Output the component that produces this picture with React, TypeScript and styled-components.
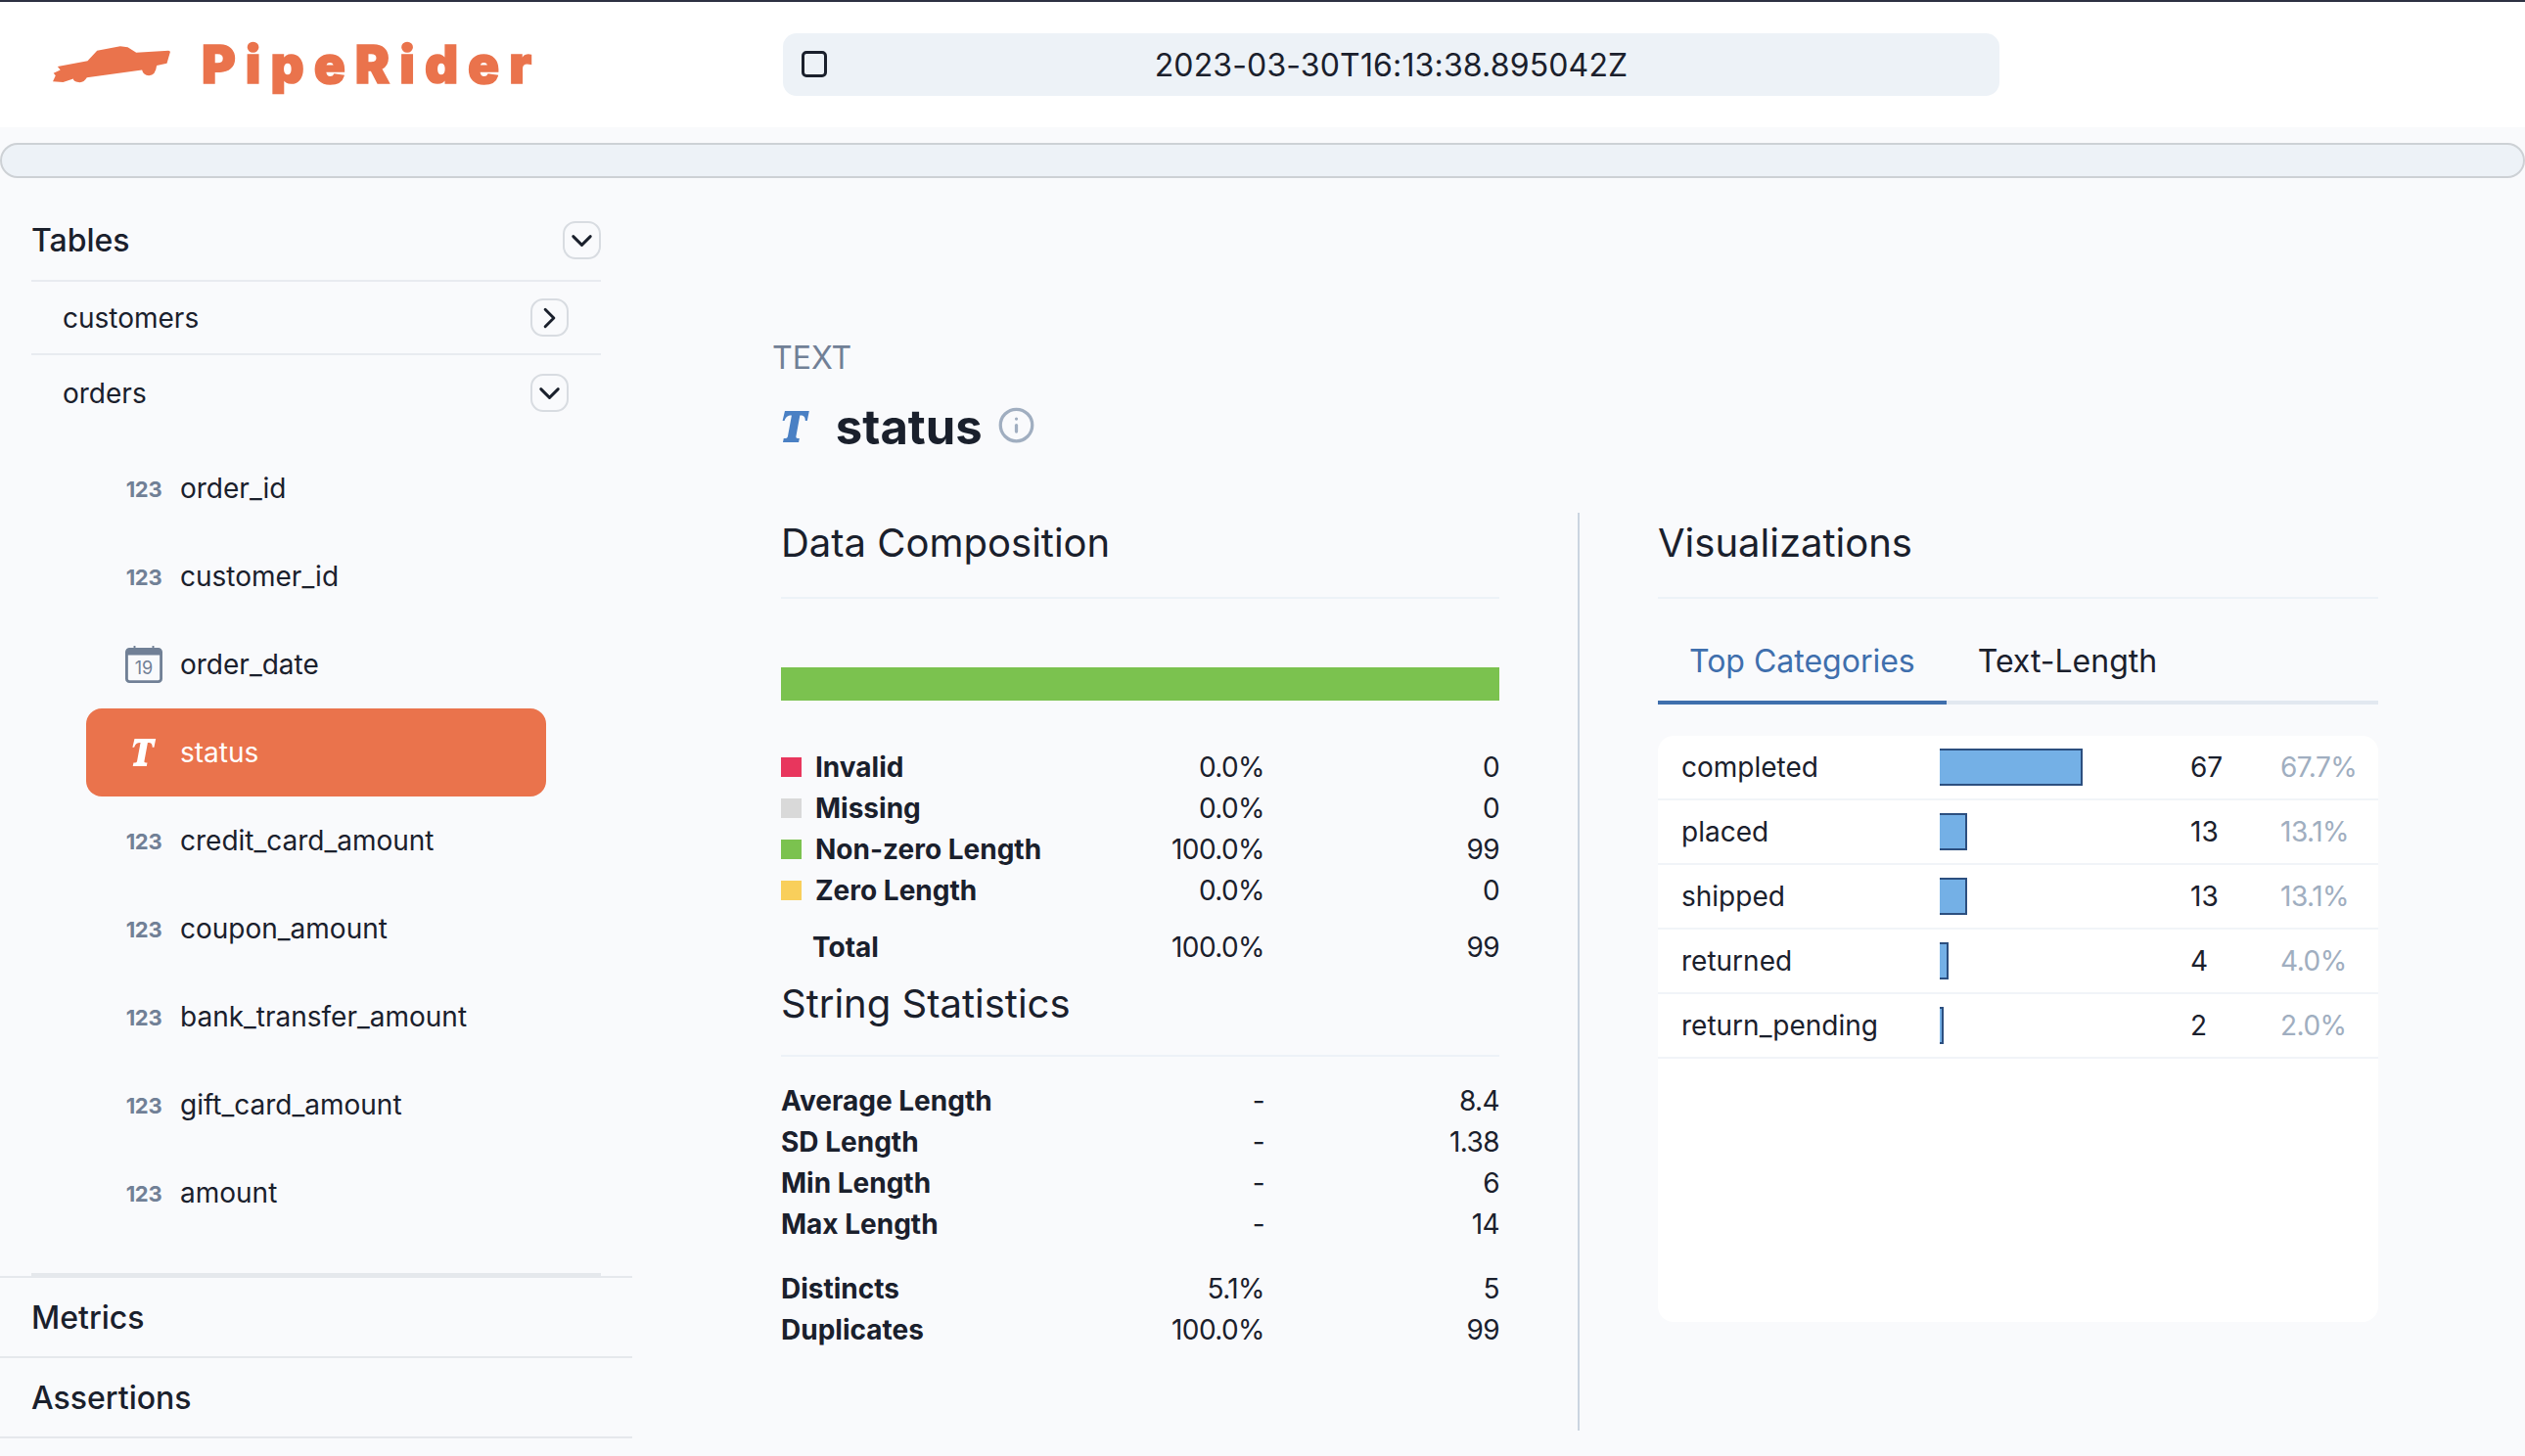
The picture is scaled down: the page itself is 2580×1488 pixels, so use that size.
import React from 'react';
import styled, { createGlobalStyle } from 'styled-components';
import { Info } from 'lucide-react';

const Global = createGlobalStyle`
  html, body { margin: 0; padding: 0; background: #f9fafc; }
  body { font-family: Inter, "Liberation Sans", sans-serif; color: #1a202c; }
  * { box-sizing: border-box; }
`;

const Page = styled.div`
  width: 2580px;
  height: 1488px;
  overflow: hidden;
  background: #f9fafc;
  display: flex;
  flex-direction: column;
`;

const Header = styled.header`
  height: 130px;
  flex: none;
  background: #fff;
  border-top: 2px solid #2d3142;
  display: flex;
  align-items: center;
  padding-left: 54px;
`;

const Brand = styled.div`
  width: 746px;
  flex: none;
  display: flex;
  align-items: center;
  gap: 32px;
`;

const BrandName = styled.span`
  font-family: Inter, "Noto Sans", sans-serif;
  font-weight: 900;
  font-size: 53px;
  line-height: 60px;
  letter-spacing: 10px;
  color: #ea734c;
  -webkit-text-stroke: 1.5px #ea734c;
`;

const RunBox = styled.div`
  width: 1243px;
  height: 64px;
  position: relative;
  background: #edf2f7;
  border-radius: 14px;
  display: flex;
  align-items: center;
  justify-content: center;
  font-size: 32px;
  letter-spacing: 0.15px;
`;

const CheckMark = styled.span`
  position: absolute;
  left: 19px;
  top: 18px;
  width: 26px;
  height: 27px;
  border: 3px solid #1a202c;
  border-radius: 5px;
`;

const Strip = styled.div`
  flex: none;
  height: 36px;
  margin-top: 16px;
  background: #edf2f7;
  border: 2px solid #cdd1d5;
  border-radius: 18px;
`;

const Body = styled.div`
  flex: 1;
  display: flex;
  min-height: 0;
`;

const Sidebar = styled.aside`
  width: 646px;
  flex: none;
  padding-top: 26px;
  display: flex;
  flex-direction: column;
`;

const TablesHead = styled.div`
  height: 80px;
  margin: 0 32px;
  border-bottom: 2px solid #e8ebf0;
  display: flex;
  align-items: center;
  justify-content: space-between;
  font-size: 32px;
  font-weight: 500;
  padding-bottom: 3px;
`;

const Toggle = styled.span`
  width: 39px;
  height: 39px;
  border: 2px solid #d8dce1;
  border-radius: 13px;
  display: flex;
  align-items: center;
  justify-content: center;
  flex: none;
`;

const TableRow = styled.div<{ $border?: boolean; $h: number }>`
  height: ${(p) => p.$h}px;
  margin: 0 32px;
  padding: 0 33px 0 32px;
  display: flex;
  align-items: center;
  justify-content: space-between;
  font-size: 28px;
  ${(p) => (p.$border ? 'border-bottom: 2px solid #e8ebf0;' : '')}
`;

const Fields = styled.div`
  margin: 0 32px;
  padding: 14px 0 0 56px;
  height: 864px;
  border-bottom: 3px solid #e5e8ec;
`;

const Field = styled.div<{ $active?: boolean }>`
  width: 470px;
  height: 90px;
  padding-left: 40px;
  display: flex;
  align-items: center;
  gap: 18px;
  font-size: 28px;
  border-radius: 16px;
  background: ${(p) => (p.$active ? '#ea734c' : 'transparent')};
  color: ${(p) => (p.$active ? '#fff' : '#1a202c')};
`;

const IconSlot = styled.span`
  width: 38px;
  flex: none;
  display: flex;
  align-items: center;
  justify-content: center;
`;

const NumIcon = styled.span`
  font-size: 22px;
  font-weight: 700;
  color: #718096;
  letter-spacing: -0.3px;
  margin-top: 2px;
`;

const Sections = styled.div`
  border-top: 2px solid #e5e8ec;
`;

const Section = styled.div`
  height: 82px;
  width: 646px;
  padding-left: 32px;
  border-bottom: 2px solid #e5e8ec;
  display: flex;
  align-items: center;
  font-size: 32px;
  font-weight: 500;
`;

const Main = styled.main`
  flex: 1;
  padding: 167px 150px 0 144px;
  display: flex;
  flex-direction: column;
`;

const TypeLabel = styled.div`
  height: 34px;
  line-height: 34px;
  font-size: 32px;
  color: #718096;
  margin-left: -1px;
`;

const TitleRow = styled.div`
  height: 70px;
  margin-top: 18px;
  padding-left: 8px;
  display: flex;
  align-items: center;
  gap: 27px;
  font-size: 49px;
  font-weight: 700;
  color: #1a202c;
`;

const InfoWrap = styled.span`
  display: flex;
  color: #a0aec0;
  margin: -4px 0 0 -12px;
`;

const Columns = styled.div`
  margin-top: 53px;
  height: 938px;
  display: flex;
`;

const LeftCol = styled.section`
  width: 824px;
  flex: none;
  padding: 0 80px 0 8px;
  border-right: 2px solid #cbd5e0;
  height: 100%;
`;

const RightCol = styled.section`
  flex: 1;
  padding-left: 80px;
`;

const Heading = styled.h2<{ $h?: number }>`
  margin: 0;
  height: ${(p) => p.$h ?? 88}px;
  border-bottom: 2px solid #edf2f7;
  font-size: 40px;
  font-weight: 400;
  line-height: 62px;
  display: flex;
  align-items: flex-start;
  color: #1a202c;
`;

const CompBar = styled.div`
  height: 34px;
  margin-top: 70px;
  background: #7bc24f;
`;

const StatGroup = styled.div<{ $mt: number }>`
  margin-top: ${(p) => p.$mt}px;
`;

const StatRow = styled.div<{ $indent?: number }>`
  height: 42px;
  display: grid;
  grid-template-columns: 1fr 160px 240px;
  align-items: center;
  font-size: 28px;
  padding-left: ${(p) => p.$indent ?? 0}px;
`;

const StatName = styled.span`
  display: flex;
  align-items: center;
  gap: 14px;
  font-weight: 700;
`;

const Swatch = styled.span<{ $c: string }>`
  width: 21px;
  height: 20px;
  background: ${(p) => p.$c};
`;

const Num = styled.span`
  text-align: right;
  letter-spacing: -0.6px;
`;

const Tabs = styled.div`
  height: 108px;
  padding-top: 39px;
  border-bottom: 4px solid #e2e8f0;
  display: flex;
`;

const Tab = styled.div<{ $active?: boolean }>`
  height: 69px;
  padding: 0 32px;
  font-size: 32px;
  line-height: 50px;
  color: ${(p) => (p.$active ? '#3f6fad' : '#1a202c')};
  ${(p) => (p.$active ? 'border-bottom: 4px solid #3f6fad;' : '')}
`;

const Card = styled.div`
  margin-top: 32px;
  height: 599px;
  background: #fff;
  border-radius: 16px;
`;

const CatRow = styled.div`
  height: 66px;
  padding-left: 24px;
  border-bottom: 2px solid #f1f4f8;
  display: grid;
  grid-template-columns: 264px 256px 92px 1fr;
  align-items: center;
  font-size: 28px;
`;

const BarTrack = styled.div`
  height: 38px;
`;

const BarFill = styled.div`
  height: 100%;
  background: #74b0e6;
  border: 2px solid #2c4f7f;
  border-left: none;
`;

const Pct = styled.span`
  color: #a0aec0;
  letter-spacing: -0.5px;
`;

const Chevron = ({ d }: { d: string }) => (
  <svg width="38" height="38" viewBox="0 0 24 24" fill="none" stroke="#1a202c" strokeWidth="2" strokeLinecap="round" strokeLinejoin="round">
    <path d={d} />
  </svg>
);
const ChevronDown = () => <Chevron d="M6 9 L12 15 L18 9" />;
const ChevronRight = () => <Chevron d="M9 6 L15 12 L9 18" />;

const Car = () => (
  <svg width="120" height="38" viewBox="70 83 345 112" preserveAspectRatio="none" fill="#ea734c">
    <path d="M70 190 L78 172 L72 165 L92 155 L84 145 L172 128 L200 97 L268 84 L290 87 L315 103 L410 97 L415 100 L405 135 L375 142 Q372 172 352 172 Q335 170 332 155 L170 178 Q160 195 145 192 Q130 190 130 182 L100 192 Z" />
  </svg>
);

const SlabT = ({ size, color }: { size: number; color: string }) => (
  <svg width={size * 0.9} height={size} viewBox="0 0 29 32" fill={color}>
    <path d="M4 0 H29 L27 10 H25 C25 6 23.5 4.5 20 4.5 H19.5 L15.5 26 C15.1 27.8 16.5 28 19 28.2 L18.2 32 H2 L2.8 28.2 C5.6 28 6.6 27.8 7 26 L11 4.5 H10.5 C7 4.5 5 6 3.6 10 H1.6 Z" />
  </svg>
);

const Calendar = () => (
  <svg width="40" height="40" viewBox="0 0 40 40">
    <rect x="1.5" y="3.5" width="37" height="35" rx="3" fill="none" stroke="#718096" strokeWidth="3" />
    <path d="M1 6 a3 3 0 0 1 3-3 H36 a3 3 0 0 1 3 3 V10 H1 Z" fill="#718096" />
    <rect x="9" y="0" width="2" height="4" fill="#718096" />
    <rect x="29" y="0" width="2" height="4" fill="#718096" />
    <text x="20" y="30" textAnchor="middle" fontFamily="Inter, sans-serif" fontSize="19" fill="#718096">19</text>
  </svg>
);

const fields = ['order_id', 'customer_id', 'order_date', 'status', 'credit_card_amount', 'coupon_amount', 'bank_transfer_amount', 'gift_card_amount', 'amount'];

const comp = [
  { n: 'Invalid', c: '#e8365d', p: '0.0%', v: '0' },
  { n: 'Missing', c: '#d9d9d9', p: '0.0%', v: '0' },
  { n: 'Non-zero Length', c: '#7bc24f', p: '100.0%', v: '99' },
  { n: 'Zero Length', c: '#f9cf5b', p: '0.0%', v: '0' },
];

const cats = [
  { n: 'completed', w: 146, v: '67', p: '67.7%' },
  { n: 'placed', w: 28, v: '13', p: '13.1%' },
  { n: 'shipped', w: 28, v: '13', p: '13.1%' },
  { n: 'returned', w: 9, v: '4', p: '4.0%' },
  { n: 'return_pending', w: 4, v: '2', p: '2.0%' },
];

export default function App() {
  return (
    <Page>
      <Global />
      <Header>
        <Brand>
          <Car />
          <BrandName>PipeRider</BrandName>
        </Brand>
        <RunBox>
          <CheckMark />
          2023-03-30T16:13:38.895042Z
        </RunBox>
      </Header>
      <Strip />
      <Body>
        <Sidebar>
          <TablesHead>
            Tables
            <Toggle><ChevronDown /></Toggle>
          </TablesHead>
          <TableRow $border $h={75}>
            customers
            <Toggle><ChevronRight /></Toggle>
          </TableRow>
          <TableRow $h={77}>
            orders
            <Toggle><ChevronDown /></Toggle>
          </TableRow>
          <Fields>
            {fields.map((f) => (
              <Field key={f} $active={f === 'status'}>
                <IconSlot>
                  {f === 'order_date' ? <Calendar /> : f === 'status' ? <SlabT size={28} color="#fff" /> : <NumIcon>123</NumIcon>}
                </IconSlot>
                {f}
              </Field>
            ))}
          </Fields>
          <Sections>
            <Section>Metrics</Section>
            <Section>Assertions</Section>
          </Sections>
        </Sidebar>
        <Main>
          <TypeLabel>TEXT</TypeLabel>
          <TitleRow>
            <SlabT size={32} color="#4a80c4" />
            status
            <InfoWrap><Info size={39} strokeWidth={2} /></InfoWrap>
          </TitleRow>
          <Columns>
            <LeftCol>
              <Heading>Data Composition</Heading>
              <CompBar />
              <StatGroup $mt={47}>
                {comp.map((c) => (
                  <StatRow key={c.n}>
                    <StatName><Swatch $c={c.c} />{c.n}</StatName>
                    <Num>{c.p}</Num>
                    <Num>{c.v}</Num>
                  </StatRow>
                ))}
              </StatGroup>
              <StatGroup $mt={16}>
                <StatRow $indent={32}>
                  <StatName>Total</StatName>
                  <Num>100.0%</Num>
                  <Num>99</Num>
                </StatRow>
              </StatGroup>
              <StatGroup $mt={6}>
                <Heading $h={85}>String Statistics</Heading>
              </StatGroup>
              <StatGroup $mt={24}>
                {[['Average Length', '8.4'], ['SD Length', '1.38'], ['Min Length', '6'], ['Max Length', '14']].map(([n, v]) => (
                  <StatRow key={n}>
                    <StatName>{n}</StatName>
                    <Num>-</Num>
                    <Num>{v}</Num>
                  </StatRow>
                ))}
              </StatGroup>
              <StatGroup $mt={24}>
                <StatRow>
                  <StatName>Distincts</StatName>
                  <Num>5.1%</Num>
                  <Num>5</Num>
                </StatRow>
                <StatRow>
                  <StatName>Duplicates</StatName>
                  <Num>100.0%</Num>
                  <Num>99</Num>
                </StatRow>
              </StatGroup>
            </LeftCol>
            <RightCol>
              <Heading>Visualizations</Heading>
              <Tabs>
                <Tab $active>Top Categories</Tab>
                <Tab>Text-Length</Tab>
              </Tabs>
              <Card>
                {cats.map((c) => (
                  <CatRow key={c.n}>
                    <span>{c.n}</span>
                    <BarTrack><BarFill style={{ width: c.w }} /></BarTrack>
                    <span>{c.v}</span>
                    <Pct>{c.p}</Pct>
                  </CatRow>
                ))}
              </Card>
            </RightCol>
          </Columns>
        </Main>
      </Body>
    </Page>
  );
}
